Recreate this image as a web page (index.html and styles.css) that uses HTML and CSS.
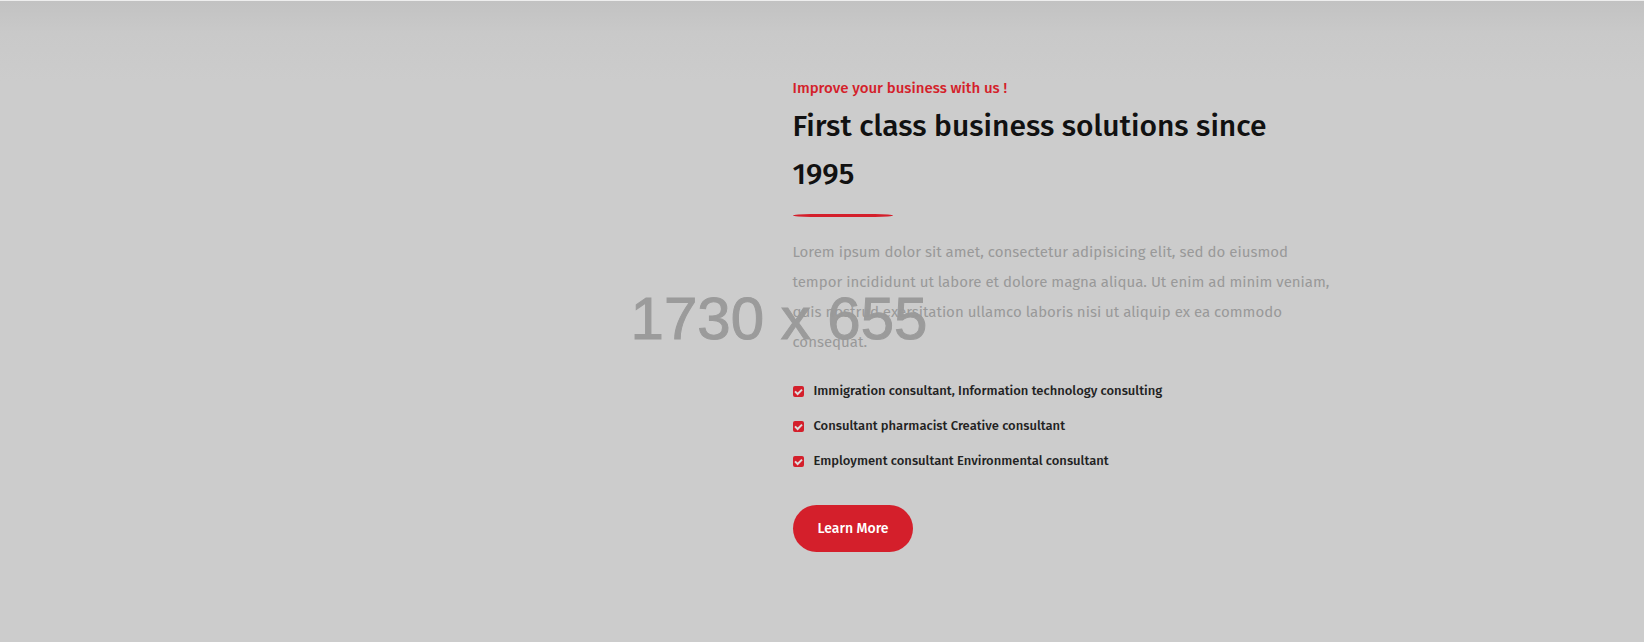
FILE: index.html
```html
<!DOCTYPE html>
<html lang="en">
<head>
<meta charset="utf-8">
<meta name="viewport" content="width=device-width, initial-scale=1">
<title>First class business solutions</title>
<link rel="stylesheet" href="styles.css">
</head>
<body>
<section class="about">
  <div class="backdrop" aria-hidden="true">1730 x 655</div>
  <div class="container">
    <div class="content">
      <p class="tagline">Improve your business with us !</p>
      <h2 class="title">First class business solutions since 1995</h2>
      <div class="divider"></div>
      <p class="text">Lorem ipsum dolor sit amet, consectetur adipisicing elit, sed do eiusmod tempor incididunt ut labore et dolore magna aliqua. Ut enim ad minim veniam, quis nostrud exersitation ullamco laboris nisi ut aliquip ex ea commodo consequat.</p>
      <ul class="features">
        <li><svg class="check" viewBox="0 0 11 11"><rect width="11" height="11" rx="2"/><path d="M2 5.4 4.6 8 9 3.6"/></svg>Immigration consultant, Information technology consulting</li>
        <li><svg class="check" viewBox="0 0 11 11"><rect width="11" height="11" rx="2"/><path d="M2 5.4 4.6 8 9 3.6"/></svg>Consultant pharmacist Creative consultant</li>
        <li><svg class="check" viewBox="0 0 11 11"><rect width="11" height="11" rx="2"/><path d="M2 5.4 4.6 8 9 3.6"/></svg>Employment consultant Environmental consultant</li>
      </ul>
      <a class="button" href="#">Learn More</a>
    </div>
  </div>
</section>
</body>
</html>
```

FILE: styles.css
```css
* {
  box-sizing: border-box;
}

body {
  margin: 0;
  background: #ccc;
  font-family: "Fira Sans", Roboto, "Noto Sans", sans-serif;
  color: #222;
}

.about {
  position: relative;
  overflow: hidden;
  min-height: 100vh;
  border-top: 1px solid #eee;
  background: linear-gradient(#c2c2c2, #c9c9c9 32px, #ccc 80px);
}

.backdrop {
  position: absolute;
  top: 0;
  right: 0;
  bottom: 6px;
  width: 1730px;
  display: flex;
  align-items: center;
  justify-content: center;
  font: 60px "Liberation Sans", Arial, sans-serif;
  color: #9b9b9b;
  -webkit-text-stroke: 1px #9b9b9b;
}

.container {
  position: relative;
  max-width: 1055px;
  margin: 0 auto;
  padding: 73px 16px 70px;
  display: flex;
  justify-content: flex-end;
}

.content {
  width: 541px;
}

.tagline {
  margin: 0;
  font-size: 15px;
  font-weight: 500;
  line-height: 28px;
  color: #d41f2b;
}

.title {
  margin: 0;
  font-size: 30px;
  font-weight: 500;
  line-height: 48px;
  color: #111;
}

.divider {
  width: 100px;
  height: 3px;
  margin: 16px 0 20px;
  border-radius: 24px / 2px;
  background: #d41f2b;
}

.text {
  margin: 0 0 22px;
  font-size: 15px;
  line-height: 30px;
  color: #999;
}

.features {
  margin: 0;
  padding: 0;
  list-style: none;
  display: grid;
  gap: 11px;
}

.features li {
  display: flex;
  align-items: center;
  gap: 10px;
  font-size: 13px;
  font-weight: 500;
  line-height: 24px;
}

.check {
  width: 11px;
  height: 11px;
  fill: #d41f2b;
}

.check path {
  fill: none;
  stroke: #ddd;
  stroke-width: 2;
}

.button {
  display: inline-block;
  margin-top: 32px;
  padding: 0 25px;
  border-radius: 24px;
  background: #d41f2b;
  color: #fff;
  font-size: 14px;
  font-weight: 500;
  line-height: 47px;
  text-decoration: none;
}
```
